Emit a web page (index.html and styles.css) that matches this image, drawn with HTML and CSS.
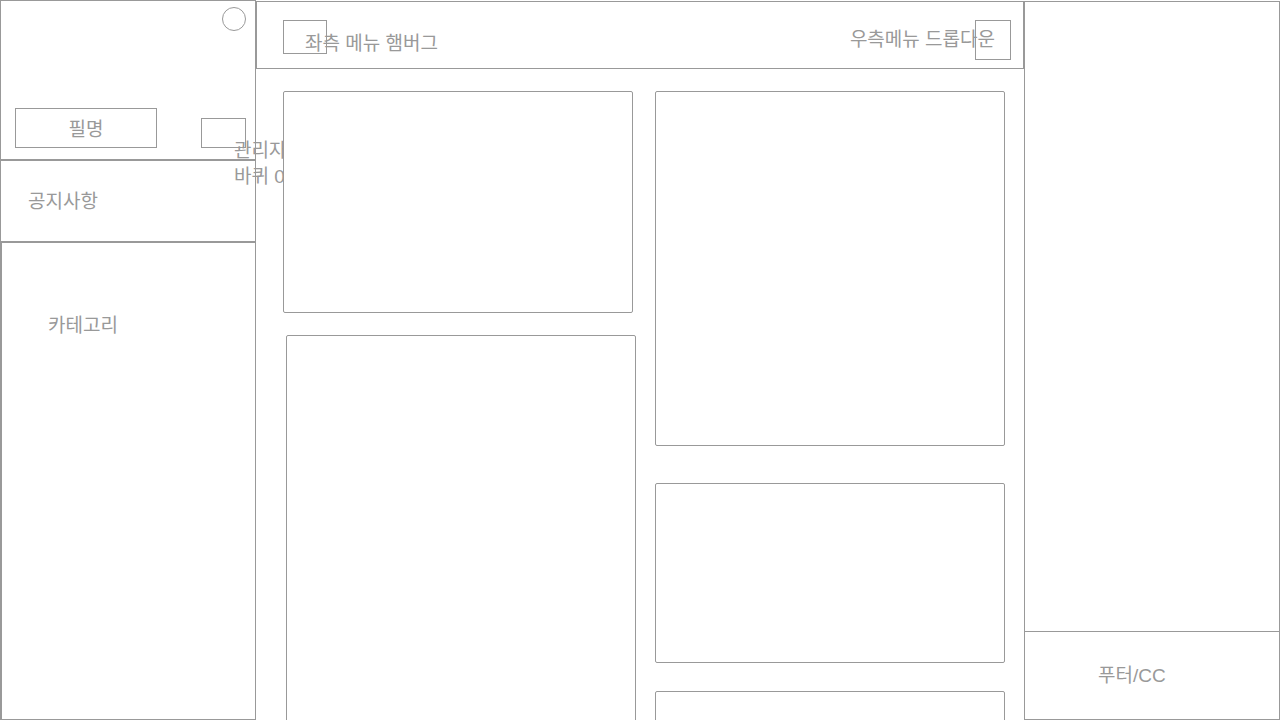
FILE: index.html
```html
<!DOCTYPE html>
<html lang="ko">
<head>
<meta charset="utf-8">
<title>Layout wireframe</title>
<link rel="stylesheet" href="styles.css">
</head>
<body>
<div class="page">
  <aside class="sidebar">
    <section class="profile">
      <div class="avatar"></div>
      <div class="profile-row">
        <div class="nick">필명</div>
        <div class="badge-box"></div>
        <div class="admin-info">
          <div>관리자</div>
          <div>바퀴 0개</div>
        </div>
      </div>
    </section>
    <section class="notice">공지사항</section>
    <section class="category">카테고리</section>
  </aside>

  <main class="main">
    <header class="topbar">
      <div class="left-menu">
        <div class="hamburger"></div>
        <span class="left-label">좌측 메뉴 햄버그</span>
      </div>
      <div class="right-menu">
        <span class="right-label">우측메뉴 드롭다운</span>
        <div class="dropdown"></div>
      </div>
    </header>
    <div class="content">
      <div class="col col-left">
        <div class="card card-a"></div>
        <div class="card card-c"></div>
      </div>
      <div class="col col-right">
        <div class="card card-b"></div>
        <div class="card card-d"></div>
        <div class="card card-e"></div>
      </div>
    </div>
  </main>

  <aside class="rightbar">
    <div class="rightbar-body"></div>
    <footer class="footer">푸터/CC</footer>
  </aside>
</div>
</body>
</html>
```

FILE: styles.css
```css
* { box-sizing: border-box; }

html, body {
  margin: 0;
  padding: 0;
  background: #fff;
  overflow: hidden;
}

body {
  font-family: "Liberation Sans", "Noto Sans CJK KR", sans-serif;
  font-size: 19px;
  line-height: 26px;
  color: #999;
}

.page {
  display: flex;
  width: 1280px;
  height: 720px;
  overflow: hidden;
}

/* ---------- left sidebar ---------- */
.sidebar {
  width: 256px;
  flex: none;
  display: flex;
  flex-direction: column;
  height: 720px;
}

.profile {
  flex: none;
  height: 160px;
  border: 1px solid #999;
  padding: 6px 9px 0 14px;
  display: flex;
  flex-direction: column;
}

.avatar {
  flex: none;
  align-self: flex-end;
  width: 24px;
  height: 24px;
  border: 1px solid #999;
  border-radius: 50%;
}

.profile-row {
  flex: none;
  display: flex;
  align-items: flex-start;
  margin-top: 77px;
}

.nick {
  width: 142px;
  height: 40px;
  border: 1px solid #999;
  display: flex;
  align-items: center;
  justify-content: center;
  padding-top: 4px;
  flex: none;
}

.badge-box {
  width: 45px;
  height: 30px;
  border: 1px solid #999;
  margin-left: 44px;
  margin-top: 10px;
  flex: none;
}

.admin-info {
  flex: none;
  width: 49px;
  margin-left: -12px;
  margin-top: 30px;
  overflow: hidden;
  white-space: nowrap;
}

.notice {
  flex: none;
  height: 82px;
  border: 1px solid #999;
  padding-left: 27px;
  padding-top: 2px;
  display: flex;
  align-items: center;
}

.category {
  flex: 1;
  border: 1px solid #999;
  border-left-width: 2px;
  padding: 70px 0 0 46px;
}

/* ---------- main ---------- */
.main {
  width: 768px;
  flex: none;
  display: flex;
  flex-direction: column;
  padding-top: 1px;
}

.topbar {
  flex: none;
  height: 68px;
  border: 1px solid #999;
  display: flex;
  justify-content: space-between;
  align-items: flex-start;
  padding: 18px 12px 0 26px;
}

.left-menu {
  display: flex;
  align-items: flex-start;
}

.hamburger {
  width: 44px;
  height: 34px;
  border: 1px solid #999;
  flex: none;
}

.left-label {
  margin-left: -22px;
  margin-top: 11px;
  white-space: nowrap;
}

.right-menu {
  display: flex;
  align-items: flex-start;
}

.right-label {
  margin-top: 7px;
  white-space: nowrap;
}

.dropdown {
  width: 36px;
  height: 40px;
  border: 1px solid #999;
  margin-left: -20px;
  flex: none;
}

.content {
  flex: none;
  display: flex;
  gap: 22px;
  padding: 22px 0 0 27px;
}

.col {
  width: 350px;
  display: flex;
  flex-direction: column;
  flex: none;
}

.card {
  border: 1px solid #999;
  border-radius: 2px;
  background: #fff;
  width: 350px;
  flex: none;
}

.card-a { height: 222px; }
.card-c { height: 420px; margin-top: 22px; margin-left: 3px; }
.card-b { height: 355px; }
.card-d { height: 180px; margin-top: 37px; }
.card-e { height: 120px; margin-top: 28px; }

/* ---------- right column ---------- */
.rightbar {
  width: 256px;
  flex: none;
  margin-top: 1px;
  height: 719px;
  border: 1px solid #999;
  display: flex;
  flex-direction: column;
}

.rightbar-body {
  flex: 1;
}

.footer {
  flex: none;
  height: 88px;
  border-top: 1px solid #999;
  display: flex;
  align-items: center;
  padding-left: 73px;
}
```
